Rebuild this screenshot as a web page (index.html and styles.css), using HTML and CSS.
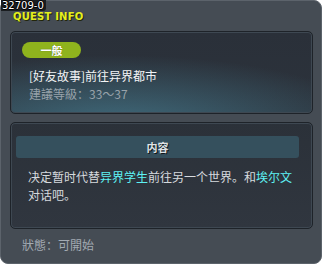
FILE: index.html
```html
<!DOCTYPE html>
<html>
<head>
<meta charset="utf-8">
<link rel="stylesheet" href="styles.css">
</head>
<body>
<div class="window">
  <div class="id-label">32709-0</div>
  <div class="title">QUEST INFO</div>
  <div class="panel panel-top">
    <div class="badge">一般</div>
    <div class="quest-name">[好友故事]前往异界都市</div>
    <div class="quest-level">建議等級：33～37</div>
  </div>
  <div class="panel panel-body">
    <div class="section-head">内容</div>
    <div class="desc">决定暂时代替<span class="hl">异界学生</span>前往另一个世界。和<span class="hl">埃尔文</span>对话吧。</div>
  </div>
  <div class="status">狀態：可開始</div>
</div>
</body>
</html>
```
FILE: styles.css
```css
html, body {
  margin: 0;
  padding: 0;
  background: #ffffff;
}
body {
  font-family: "Noto Sans CJK SC", "Noto Sans", sans-serif;
  width: 322px;
  height: 266px;
}
.window {
  position: relative;
  box-sizing: border-box;
  width: 322px;
  height: 264px;
  background: #454c54;
  border: 1px solid #5c636b;
  border-radius: 8px;
  padding: 0 8px 0 9px;
  display: flex;
  flex-direction: column;
}
.id-label {
  position: absolute;
  left: 0;
  top: -1px;
  font-family: "DejaVu Sans", sans-serif;
  font-size: 10px;
  line-height: 11px;
  color: #ffffff;
  background: #1a1d20;
  padding: 0 2px 0 1px;
  border-radius: 0 0 3px 0;
  text-shadow: 1px 0 0 #000, -1px 0 0 #000, 0 1px 0 #000, 0 -1px 0 #000;
}
.title {
  height: 30px;
  box-sizing: border-box;
  padding: 10px 0 0 3px;
  font-family: "DejaVu Sans", sans-serif;
  font-weight: bold;
  font-size: 10px;
  line-height: 12px;
  color: #e4f020;
  letter-spacing: 0.2px;
  text-shadow: 1px 1px 0 #22260a;
}
.panel {
  box-sizing: border-box;
  border: 1px solid #1e2329;
  box-shadow: inset 0 0 0 1px #3e4852;
  border-radius: 5px;
  background: #2b3139;
}
.panel-top {
  height: 83px;
  padding: 10px 0 0 11px;
  background:
    radial-gradient(ellipse 260px 70px at 35% 115%, rgba(70, 125, 145, 0.75), rgba(70, 125, 145, 0) 100%),
    linear-gradient(#2a3039, #2c333c);
}
.badge {
  width: 59px;
  height: 16px;
  border-radius: 8px;
  background: #8fb31d;
  color: #ffffff;
  font-weight: bold;
  font-size: 11px;
  line-height: 16px;
  text-align: center;
  text-shadow: 0 0 1px #4c6010;
}
.quest-name {
  margin: 9px 0 0 7px;
  font-size: 12px;
  line-height: 18px;
  color: #f2f4f6;
}
.quest-level {
  margin: 0 0 0 7px;
  font-size: 12px;
  line-height: 18px;
  color: #98a2aa;
}
.panel-body {
  margin-top: 8px;
  height: 107px;
  padding: 13px 0 0 5px;
  background: linear-gradient(#2b3139, #30363f);
}
.section-head {
  width: 283px;
  height: 22px;
  border-radius: 3px;
  background: #35505d;
  color: #dfe3e6;
  font-weight: bold;
  font-size: 11px;
  line-height: 22px;
  text-align: center;
  text-shadow: 1px 1px 0 #101418;
}
.desc {
  margin: 10px 10px 0 12px;
  font-size: 12px;
  line-height: 18px;
  color: #d6dade;
}
.hl {
  color: #5ef2f4;
}
.status {
  margin: 8px 0 0 12px;
  font-size: 12px;
  line-height: 16px;
  color: #a2aab2;
}
```
